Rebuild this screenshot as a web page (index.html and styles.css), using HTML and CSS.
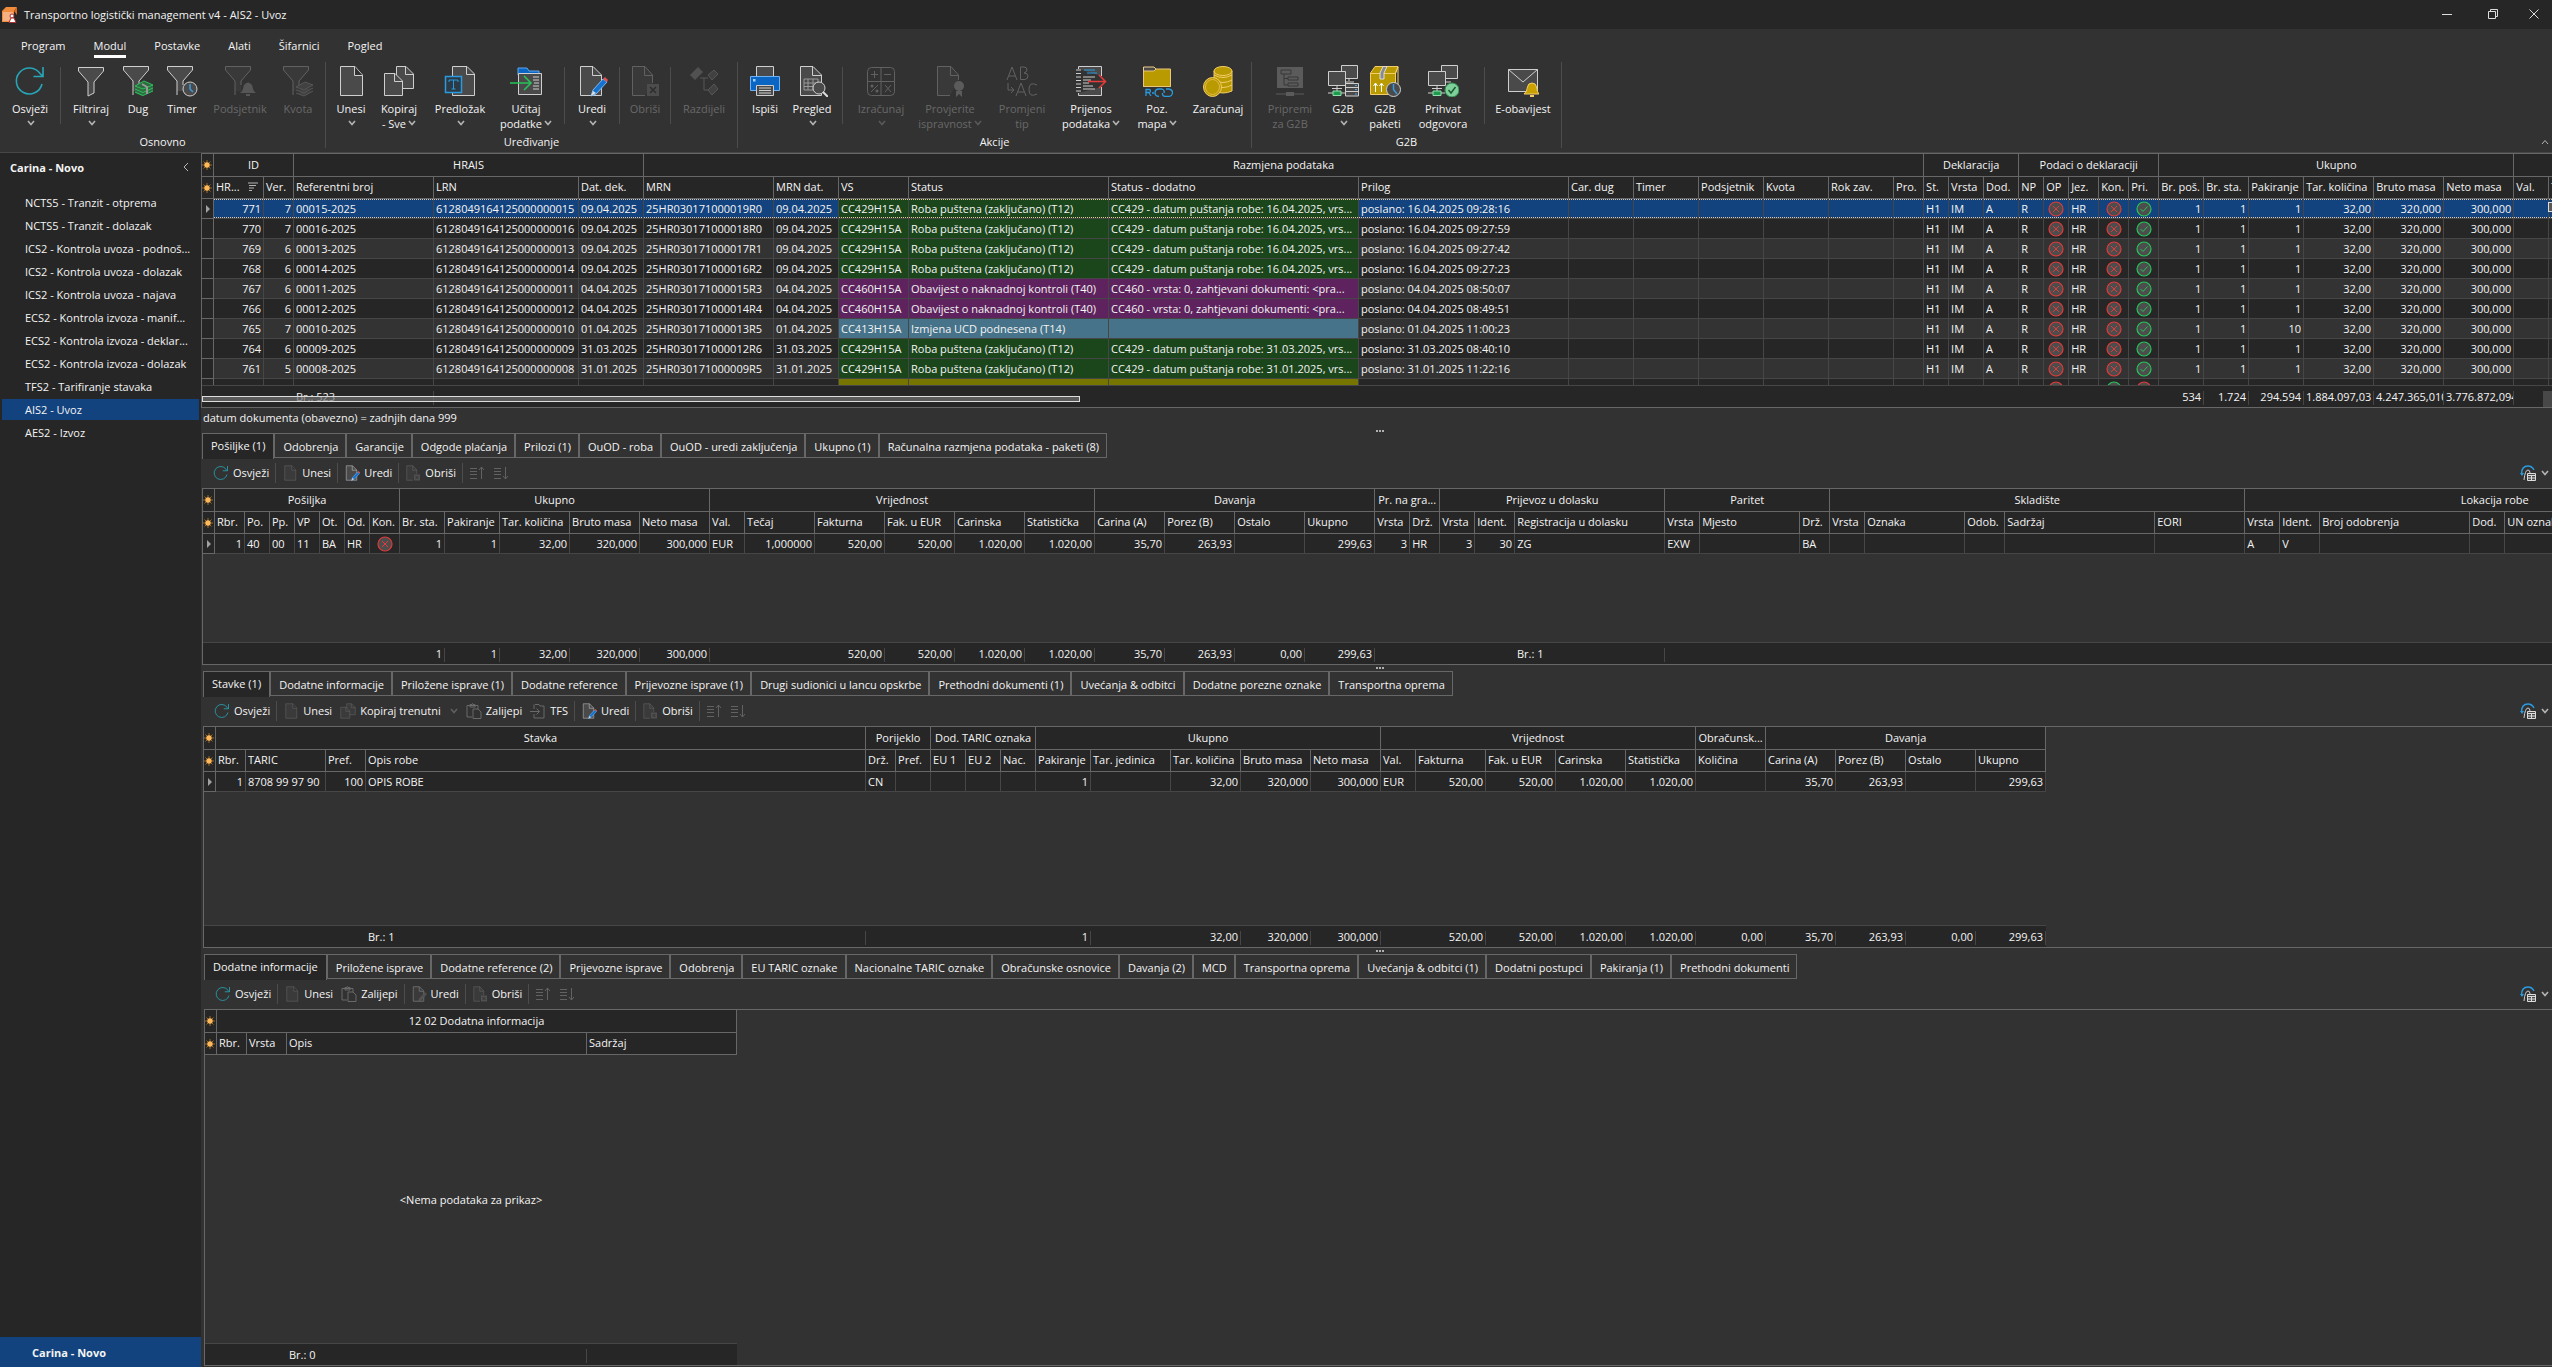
FILE: index.html
```html
<!DOCTYPE html>
<html lang="hr">
  <head>
    <meta charset="UTF-8">
    <meta name="viewport" content="width=device-width, initial-scale=1.0">
    <title>Transportno logistički management v4 - AIS2 - Uvoz</title>
    <link rel="stylesheet" href="styles.css">
  </head>
  <body>
    <!-- icon sprite -->
    <svg class="sprite" aria-hidden="true">
      <symbol id="i-refresh" viewBox="0 0 32 32"><path d="M28 19A13 13 0 1 1 26 8.500L29 11.500M29 2V11.500H19.500" fill="none" stroke="#27a6b8" stroke-width="1.600"/></symbol>
      <symbol id="i-funnel" viewBox="0 0 32 32"><path d="M3.500 2.500H28.500V6L19 17V28L13 31V17L3.500 6Z" fill="#4a4a4a" stroke="#cfcfcf"/></symbol>
      <symbol id="i-funnel-s" viewBox="0 0 32 32"><path d="M1.500 1.500H26.500V5L17 16V26H11V16L1.500 5Z" fill="#4a4a4a"/><path d="M17 20V16L26.500 5V1.500H1.500V5L11 16V30" fill="none" stroke="#cfcfcf"/></symbol>
      <symbol id="i-debt" viewBox="0 0 32 32"><use href="#i-funnel-s"/><path d="M13 21L22 16L31 20V26L20 31L13 28Z" fill="#2f6b41"/><path d="M13 21L22 16L31 20L21 24ZM13 24L21 27.500L31 23M13 27L21 30.500L31 26" fill="none" stroke="#2cc05c"/><path d="M20 19L25 22V29" fill="none" stroke="#999" stroke-width="2"/></symbol>
      <symbol id="i-timer" viewBox="0 0 32 32"><use href="#i-funnel-s"/><circle cx="24" cy="24" r="7" fill="#4a4a4a" stroke="#cfcfcf"/><path d="M24 19V24L27 27" fill="none" stroke="#3a9be0" stroke-width="1.500"/></symbol>
      <symbol id="i-reminder" viewBox="0 0 32 32"><use href="#i-funnel-s"/><path d="M16 28C19 26 19 23 20 20Q24 15 28 20C29 23 29 26 32 28ZM22 29H26V31H22Z" fill="#aaa"/></symbol>
      <symbol id="i-quota" viewBox="0 0 32 32"><use href="#i-funnel-s"/><path d="M14 22L23 17L31 20L22 25ZM14 25L22 28L31 23M14 28L22 31L31 26" fill="#666" stroke="#aaa"/></symbol>
      <symbol id="i-doc" viewBox="0 0 32 32"><path d="M5.500 1.500H20L27.500 10V30.500H5.500Z" fill="#4a4a4a" stroke="#cfcfcf"/><path d="M19.500 1.500V10.500H27.500" fill="#323232" stroke="#cfcfcf"/></symbol>
      <symbol id="i-copy" viewBox="0 0 32 32"><path d="M13.500 1.500H23L30.500 9V23.500H13.500Z" fill="#4a4a4a" stroke="#cfcfcf"/><path d="M22.500 1.500V9.500H30.500" fill="none" stroke="#cfcfcf"/><path d="M1.500 8.500H12L19.500 16V30.500H1.500Z" fill="#4a4a4a" stroke="#cfcfcf"/><path d="M11.500 8.500V16.500H19.500" fill="none" stroke="#cfcfcf"/></symbol>
      <symbol id="i-template" viewBox="0 0 32 32"><path d="M8.500 1.500H23L30.500 9V30.500H8.500Z" fill="#4a4a4a" stroke="#cfcfcf"/><path d="M22.500 1.500V9.500H30.500" fill="none" stroke="#cfcfcf"/><path d="M1.500 11.500H17.500V27.500H1.500Z" fill="#2b3a44" stroke="#2a9be0" stroke-width="1.500"/><path d="M5 17V15H14V17M9.500 15V24M7.500 24H11.500" fill="none" stroke="#2a9be0"/></symbol>
      <symbol id="i-load" viewBox="0 0 32 32"><path d="M8 3H17L19 6H29V10H8Z" fill="#0a66c2" stroke="#5ea6ee"/><path d="M8.500 8.500H31.500V29.500H8.500Z" fill="#4a4a4a" stroke="#cfcfcf"/><path d="M23 12H29M23 15H29M24 18H29M23 21H29M23 24H29" stroke="#cfcfcf"/><path d="M0 18H20M14 11L21 18L14 25" fill="none" stroke="#26c45a" stroke-width="1.500"/></symbol>
      <symbol id="i-edit" viewBox="0 0 32 32"><path d="M4.500 1.500H17L25.500 10V30.500H4.500Z" fill="#4a4a4a" stroke="#cfcfcf"/><path d="M16.500 1.500V10.500H25.500" fill="none" stroke="#cfcfcf"/><path d="M15 31L17 25L27 14L31 17L20 29Z" fill="#1573cf" stroke="#7fb8f0"/><path d="M15 31L17 26L20 28Z" fill="#ddd"/><path d="M27 14L29 12L32 15L31 17Z" fill="#e05050"/></symbol>
      <symbol id="i-edit-off" viewBox="0 0 32 32"><path d="M4.500 1.500H17L25.500 10V30.500H4.500Z" fill="#4a4a4a" stroke="#cfcfcf" stroke-width="2"/><path d="M16.500 1.500V10.500H25.500" fill="none" stroke="#cfcfcf" stroke-width="2"/><path d="M15 31L17 25L28 13L31 16L20 29Z" fill="#888" stroke="#aaa"/></symbol>
      <symbol id="i-delete" viewBox="0 0 32 32"><path d="M16 30.500H3.500V1.500H16L23.500 10V18" fill="#4a4a4a" stroke="#cfcfcf"/><path d="M15.500 1.500V10.500H23.500" fill="none" stroke="#cfcfcf"/><path d="M18 19H30V31H18Z" fill="#888"/><path d="M21 22L27 28M27 22L21 28" stroke="#222" stroke-width="1.500"/></symbol>
      <symbol id="i-split" viewBox="0 0 32 32"><path d="M2 10L10 2L15 7L7 15Z" fill="#999"/><path d="M20 10L26 5L30 9L24 15ZM20 25L26 19L30 24L24 30Z" fill="#666" stroke="#aaa"/><path d="M12 13H20M16 13V25H20" fill="none" stroke="#aaa"/></symbol>
      <symbol id="i-print" viewBox="0 0 32 32"><path d="M7.500 1.500H24.500V12H7.500Z" fill="#4a4a4a" stroke="#cfcfcf"/><path d="M1.500 11.500H30.500V25.500H1.500Z" fill="#0a66c2" stroke="#6db1f3"/><path d="M4 14H6.500V16.500H4Z" fill="#9fd0ff"/><path d="M7.500 20.500H24.500V30.500H7.500Z" fill="#4a4a4a" stroke="#cfcfcf"/><path d="M10 23H22M10 25.500H22M10 28H22" stroke="#cfcfcf"/></symbol>
      <symbol id="i-preview" viewBox="0 0 32 32"><path d="M4.500 1.500H17L25.500 10V30.500H4.500Z" fill="#4a4a4a" stroke="#cfcfcf"/><path d="M16.500 1.500V10.500H25.500" fill="none" stroke="#cfcfcf"/><path d="M8 14H22V25H8ZM8 18H22M8 21.500H22M12 14V25M17 14V25" fill="none" stroke="#999"/><circle cx="23" cy="23" r="6" fill="#4a4a4a" stroke="#cfcfcf"/><path d="M27 27L32 32" stroke="#ddd" stroke-width="2"/></symbol>
      <symbol id="i-calc" viewBox="0 0 32 32"><rect x="2.500" y="2.500" width="27" height="28" rx="4" fill="none" stroke="#cfcfcf"/><path d="M16 2.500V30.500M2.500 16.500H29.500M6 9.500H13M9.500 6V13M19 9.500H26M20 20L26 27M26 20L20 27M6 27L13 20" fill="none" stroke="#cfcfcf"/><circle cx="7" cy="21" r="1.500" fill="#cfcfcf"/><circle cx="12" cy="26" r="1.500" fill="#cfcfcf"/></symbol>
      <symbol id="i-verify" viewBox="0 0 32 32"><path d="M16 30.500H3.500V1.500H17L24.500 10V15" fill="#4a4a4a" stroke="#cfcfcf"/><path d="M16.500 1.500V10.500H24.500" fill="none" stroke="#cfcfcf"/><circle cx="25" cy="21" r="5" fill="#bbb"/><path d="M22 26V32L25 29L28 32V26Z" fill="#bbb"/></symbol>
      <symbol id="i-retype" viewBox="0 0 32 32"><path d="M1 15L6 2L11 15M3 11H9M14.500 2V14.500H19Q22 14 22 11Q22 8 18 8Q21 7 21 5Q21 2 18 2ZM2 18V25H8M5 22L8 25L5 28M10 31L15 18L20 31M12 27H18M31 20Q23 16 23 24.500Q23 33 31 29" fill="none" stroke="#cfcfcf"/></symbol>
      <symbol id="i-transfer" viewBox="0 0 32 32"><path d="M3.500 4V1.500H26.500V11M26.500 22V30.500H3.500V28" fill="#4a4a4a" stroke="#cfcfcf"/><path d="M1 5H6M1 8.500H6M1 12H6M1 15.500H6M1 19H6M1 22.500H6M1 26H6" stroke="#cfcfcf"/><path d="M9 5H20M12 8H22" stroke="#2a9be0"/><path d="M8 12H20M8 15H16M8 18H14M8 21H18M8 24H20" stroke="#cfcfcf"/><path d="M13 16.500H30M24 10L30.500 16.500L24 23" fill="none" stroke="#e83a3a" stroke-width="1.500"/></symbol>
      <symbol id="i-folder" viewBox="0 0 32 32"><path d="M2.500 21.500V2H13L16 5H29.500V21.500Z" fill="#4a4a4a" stroke="#f3cd8a"/><path d="M2.500 21.500V6H13L15 4H29.500V21.500Z" fill="#b99a00" stroke="#e8c77c"/><path d="M5 31V24.500H8Q9.500 24.500 9.500 26Q9.500 27.500 8 27.500H5M8 28L10 31M11 28H13M18 31.500Q14 31 14 28Q14 24 18 24H21Q24 25 23 28M25 24H28Q32 25 31.500 28Q31 31.500 27 31.500H24Q21 31 21.500 28" fill="none" stroke="#2a9be0" stroke-width="1.300"/></symbol>
      <symbol id="i-coins" viewBox="0 0 32 32"><path d="M12 6V26Q21 30 30 26V6Z" fill="#b99a00" stroke="#f3cd6a"/><ellipse cx="21" cy="6" rx="9" ry="4.500" fill="#b99a00" stroke="#f3cd6a"/><path d="M12 10Q21 15 30 10M12 15Q21 20 30 15M12 20Q21 25 30 20" fill="none" stroke="#f3cd6a"/><ellipse cx="10.500" cy="22" rx="9" ry="9.500" fill="#b99a00" stroke="#f3cd6a"/><ellipse cx="10.500" cy="22" rx="7" ry="7.500" fill="none" stroke="#e2b84a"/></symbol>
      <symbol id="i-prepare" viewBox="0 0 32 32"><path d="M3 2H29V23H3Z" fill="#bbb"/><path d="M7 5H17V9H7ZM14 12H24V15H14ZM14 18H24V21H14ZM10 9V20H14M10 13.500H14" fill="none" stroke="#444"/><path d="M2 29H30" stroke="#bbb"/><path d="M12 27H20V31H12Z" fill="#bbb"/></symbol>
      <symbol id="i-g2b" viewBox="0 0 32 32"><path d="M14.500 .5H30.500V13.500H14.500Z" fill="#4a4a4a" stroke="#cfcfcf"/><path d="M22 14V16M17 17H27" stroke="#cfcfcf"/><path d="M1.500 6.500H18.500V20.500H1.500Z" fill="#4a4a4a" stroke="#cfcfcf"/><path d="M10 21V26M5 23.500H15M1 28H18" stroke="#cfcfcf"/><path d="M6 26H14V30.500H6Z" fill="#1f9a4c" stroke="#8fdfae"/><path d="M18.500 18.500H31.500V31H18.500ZM18.500 22.500H31.500M18.500 26.500H31.500" fill="#4a4a4a" stroke="#cfcfcf"/><path d="M28 20.500H30M28 24.500H30M28 29H30" stroke="#4aa8f0"/></symbol>
      <symbol id="i-package" viewBox="0 0 32 32"><path d="M1.500 8L6 1.500H29L26.500 8V29.500H1.500Z" fill="#b99a00" stroke="#f3cd6a"/><path d="M1.500 8.500H26.500L29 2V20" fill="none" stroke="#f3cd6a"/><path d="M14 1.500H18L15 8V14H11V8Z" fill="#8a8a8a" stroke="#ddd"/><path d="M6.500 19V27M4.500 21L6.500 18L8.500 21M12.500 19V27M10.500 21L12.500 18L14.500 21" fill="none" stroke="#fff"/><circle cx="24.500" cy="24.500" r="7" fill="#4a4a4a" stroke="#cfcfcf"/><path d="M24.500 19V24.500L28 29" fill="none" stroke="#3a9be0" stroke-width="1.500"/></symbol>
      <symbol id="i-accept" viewBox="0 0 32 32"><path d="M14.500 .5H30.500V13.500H14.500Z" fill="#4a4a4a" stroke="#cfcfcf"/><path d="M17 17H24" stroke="#cfcfcf"/><path d="M1.500 6.500H18.500V20.500H1.500Z" fill="#4a4a4a" stroke="#cfcfcf"/><path d="M10 21V26M5 23.500H15M1 28H18" stroke="#cfcfcf"/><path d="M6 26H14V30.500H6Z" fill="#1f9a4c" stroke="#8fdfae"/><circle cx="25" cy="25" r="7" fill="#7fcf9b" stroke="#2f8f50"/><path d="M21.500 25L24 28L28.500 22" fill="none" stroke="#1c5a30" stroke-width="1.500"/></symbol>
      <symbol id="i-mail" viewBox="0 0 32 32"><path d="M1.500 4.500H30.500V26.500H1.500Z" fill="#4a4a4a" stroke="#cfcfcf"/><path d="M1.500 4.500L16 17L30.500 4.500" fill="none" stroke="#cfcfcf"/><path d="M17 29Q20 27 20.500 22Q21 18 25 18Q29 18 29.500 22Q30 27 32 29Z" fill="#c9a200" stroke="#f3cd6a"/><path d="M23 31H27" stroke="#f3cd6a" stroke-width="2"/></symbol>
      <symbol id="i-paste" viewBox="0 0 32 32"><path d="M12 28H2V5H24V12M8 8V3H12Q13 -1 14 3H18V8Z" fill="none" stroke="#cfcfcf" stroke-width="2"/><path d="M14 12H24L30 18V31H14Z" fill="none" stroke="#cfcfcf" stroke-width="2"/></symbol>
      <symbol id="i-tfs" viewBox="0 0 32 32"><path d="M10 3H18L20 6H28V30H8V22M8 12V3M0 17H18M13 11L19 17L13 23" fill="none" stroke="#cfcfcf" stroke-width="2"/></symbol>
      <symbol id="i-up" viewBox="0 0 16 16"><path d="M1 3.500H8M1 6.500H8M1 9.500H8M1 13.500H8M12.500 14V2M10 5L12.500 2L15 5" fill="none" stroke="#bbb"/></symbol>
      <symbol id="i-down" viewBox="0 0 16 16"><path d="M1 3.500H8M1 6.500H8M1 9.500H8M1 13.500H8M12.500 2V14M10 11L12.500 14L15 11" fill="none" stroke="#bbb"/></symbol>
      <symbol id="i-restore" viewBox="0 0 16 16"><path d="M1.500 9Q1.500 1 8 1Q12 1 14 5" fill="none" stroke="#2a9be0" stroke-width="1.500"/><path d="M0 8L2 11L4 8Z" fill="#2a9be0"/><path d="M4 15Q5 5 8 5Q10 5 10 8" fill="none" stroke="#cfcfcf"/><path d="M7.500 8.500H15.500V15.500H7.500ZM7.500 10.500H15.500M7.500 13H15.500M11.500 10.500V15.500" fill="#4a4a4a" stroke="#ddd"/></symbol>
      <symbol id="i-chev" viewBox="0 0 8 6"><path d="M1 1L4 4.500L7 1" fill="none" stroke="#b4b4b4" stroke-width="1.600"/></symbol>
      <symbol id="i-star" viewBox="0 0 10 10"><path d="M5 0V10M0 5H10M1.500 1.500L8.500 8.500M8.500 1.500L1.500 8.500" stroke="#9c6a22"/><circle cx="5" cy="5" r="2.700" fill="#ffb95a"/></symbol>
      <symbol id="i-no" viewBox="0 0 16 16"><circle cx="8" cy="8" r="7" fill="#4d4d4d" stroke="#e03a3a" stroke-width="1.200"/><path d="M5 5L11 11M11 5L5 11" stroke="#e03a3a"/></symbol>
      <symbol id="i-yes" viewBox="0 0 16 16"><circle cx="8" cy="8" r="7" fill="#4d4d4d" stroke="#26c45a" stroke-width="1.200"/><path d="M4.500 8L7 10.500L11.500 5.500" fill="none" stroke="#26c45a"/></symbol>
      <symbol id="i-sort" viewBox="0 0 10 9"><path d="M0 1H10M1 3.500H8M1 6H6M1 8.500H4" stroke="#b4b4b4"/></symbol>
    </svg>

    <header class="titlebar">
      <svg class="app-icon" viewBox="0 0 16 16"><path d="M0 4L4 0H15L12 4V15H0Z" fill="#f08c3c"/><path d="M1 5H11V14H1Z" fill="#f5b183"/><path d="M12 4L15 0V8" fill="#d96a1e"/><circle cx="10" cy="9" r="2" fill="#fff" stroke="#a33"/><path d="M7 15.500L9 11H12L14 15.500Z" fill="#fff" stroke="#a33"/></svg>
      <h1>Transportno logistički management v4 - AIS2 - Uvoz</h1>
      <div class="win-buttons">
        <button aria-label="Minimiziraj"><svg viewBox="0 0 10 10"><path d="M0 5.500H10" stroke="#ddd"/></svg></button>
        <button aria-label="Vrati"><svg viewBox="0 0 10 10"><path d="M.5 2.500H7.500V9.500H.5ZM2.500 2V.5H9.500V7.500H8" fill="none" stroke="#ddd"/></svg></button>
        <button aria-label="Zatvori"><svg viewBox="0 0 10 10"><path d="M.5 .5L9.500 9.500M9.500 .5L.5 9.500" stroke="#ddd"/></svg></button>
      </div>
    </header>

    <nav class="menu">
      <button>Program</button>
      <button class="active">Modul</button>
      <button>Postavke</button>
      <button>Alati</button>
      <button>Šifarnici</button>
      <button>Pogled</button>
    </nav>

    <section class="ribbon">
      <div class="group">
        <div class="group-items">
          <button class="rb w50"><svg><use href="#i-refresh"/></svg>Osvježi<br><svg class="chev"><use href="#i-chev"/></svg></button>
          <span class="sep"></span>
          <button class="rb w50"><svg><use href="#i-funnel"/></svg>Filtriraj<br><svg class="chev"><use href="#i-chev"/></svg></button>
          <button class="rb w44"><svg><use href="#i-debt"/></svg>Dug</button>
          <button class="rb w44"><svg><use href="#i-timer"/></svg>Timer</button>
          <button class="rb w72" disabled><svg><use href="#i-reminder"/></svg>Podsjetnik</button>
          <button class="rb w44" disabled><svg><use href="#i-quota"/></svg>Kvota</button>
        </div>
        <div class="group-name">Osnovno</div>
      </div>
      <div class="group">
        <div class="group-items">
          <button class="rb w40"><svg><use href="#i-doc"/></svg>Unesi<br><svg class="chev"><use href="#i-chev"/></svg></button>
          <button class="rb w56"><svg><use href="#i-copy"/></svg>Kopiraj<br>- Sve<svg class="chev"><use href="#i-chev"/></svg></button>
          <button class="rb w66"><svg><use href="#i-template"/></svg>Predložak<br><svg class="chev"><use href="#i-chev"/></svg></button>
          <button class="rb w66"><svg><use href="#i-load"/></svg>Učitaj<br>podatke<svg class="chev"><use href="#i-chev"/></svg></button>
          <span class="sep"></span>
          <button class="rb w44"><svg><use href="#i-edit"/></svg>Uredi<br><svg class="chev"><use href="#i-chev"/></svg></button>
          <span class="sep"></span>
          <button class="rb w40" disabled><svg><use href="#i-delete"/></svg>Obriši</button>
          <span class="sep"></span>
          <button class="rb w56" disabled><svg><use href="#i-split"/></svg>Razdijeli</button>
        </div>
        <div class="group-name">Uređivanje</div>
      </div>
      <div class="group">
        <div class="group-items">
          <button class="rb w44"><svg><use href="#i-print"/></svg>Ispiši</button>
          <button class="rb w50"><svg><use href="#i-preview"/></svg>Pregled<br><svg class="chev"><use href="#i-chev"/></svg></button>
          <span class="sep"></span>
          <button class="rb w66" disabled><svg><use href="#i-calc"/></svg>Izračunaj<br><svg class="chev"><use href="#i-chev"/></svg></button>
          <button class="rb w72" disabled><svg><use href="#i-verify"/></svg>Provjerite<br>ispravnost<svg class="chev"><use href="#i-chev"/></svg></button>
          <button class="rb w72" disabled><svg><use href="#i-retype"/></svg>Promjeni<br>tip</button>
          <button class="rb w66"><svg><use href="#i-transfer"/></svg>Prijenos<br>podataka<svg class="chev"><use href="#i-chev"/></svg></button>
          <button class="rb w66"><svg><use href="#i-folder"/></svg>Poz.<br>mapa<svg class="chev"><use href="#i-chev"/></svg></button>
          <button class="rb w56"><svg><use href="#i-coins"/></svg>Zaračunaj</button>
        </div>
        <div class="group-name">Akcije</div>
      </div>
      <div class="group">
        <div class="group-items">
          <button class="rb w66" disabled><svg><use href="#i-prepare"/></svg>Pripremi<br>za G2B</button>
          <button class="rb w40"><svg><use href="#i-g2b"/></svg>G2B<br><svg class="chev"><use href="#i-chev"/></svg></button>
          <button class="rb w44"><svg><use href="#i-package"/></svg>G2B<br>paketi</button>
          <button class="rb w72"><svg><use href="#i-accept"/></svg>Prihvat<br>odgovora</button>
          <span class="sep"></span>
          <button class="rb w66"><svg><use href="#i-mail"/></svg>E-obavijest</button>
        </div>
        <div class="group-name">G2B</div>
      </div>
      <button class="collapse" aria-label="Sažmi vrpcu"><svg viewBox="0 0 8 6"><path d="M1 5L4 1.500L7 5" fill="none" stroke="#b4b4b4"/></svg></button>
    </section>

    <div class="workspace">
      <aside class="sidebar">
        <div class="side-head">
          <h2>Carina - Novo</h2>
          <button aria-label="Sakrij"><svg viewBox="0 0 6 10"><path d="M5 1L1 5L5 9" fill="none" stroke="#b4b4b4"/></svg></button>
        </div>
        <ul>
          <li><a href="#">NCTS5 - Tranzit - otprema</a></li>
          <li><a href="#">NCTS5 - Tranzit - dolazak</a></li>
          <li><a href="#">ICS2 - Kontrola uvoza - podnoš...</a></li>
          <li><a href="#">ICS2 - Kontrola uvoza - dolazak</a></li>
          <li><a href="#">ICS2 - Kontrola uvoza - najava</a></li>
          <li><a href="#">ECS2 - Kontrola izvoza - manif...</a></li>
          <li><a href="#">ECS2 - Kontrola izvoza - deklar...</a></li>
          <li><a href="#">ECS2 - Kontrola izvoza - dolazak</a></li>
          <li><a href="#">TFS2 - Tarifiranje stavaka</a></li>
          <li><a href="#" class="active">AIS2 - Uvoz</a></li>
          <li><a href="#">AES2 - Izvoz</a></li>
        </ul>
        <a href="#" class="side-foot">Carina - Novo</a>
      </aside>

      <main class="content">
        <div class="grid grid-main" id="declarations">
          <div class="hscroll"></div>
          <div class="vscroll"></div>
          <div class="corner"></div>
        </div>
        <p class="filter">datum dokumenta (obavezno) = zadnjih dana 999</p>
        <div class="splitter"></div>

        <section class="level-1">
          <div class="tabs">
            <button class="active">Pošiljke (1)</button>
            <button>Odobrenja</button>
            <button>Garancije</button>
            <button>Odgode plaćanja</button>
            <button>Prilozi (1)</button>
            <button>OuOD - roba</button>
            <button>OuOD - uredi zaključenja</button>
            <button>Ukupno (1)</button>
            <button>Računalna razmjena podataka - paketi (8)</button>
          </div>
          <div class="toolbar">
            <button><svg><use href="#i-refresh"/></svg>Osvježi</button>
            <span class="tsep"></span>
            <button class="off"><svg><use href="#i-doc"/></svg>Unesi</button>
            <span class="tsep"></span>
            <button><svg><use href="#i-edit"/></svg>Uredi</button>
            <span class="tsep"></span>
            <button class="off"><svg><use href="#i-delete"/></svg>Obriši</button>
            <span class="tsep"></span>
            <button class="off" aria-label="Gore"><svg><use href="#i-up"/></svg></button>
            <button class="off" aria-label="Dolje"><svg><use href="#i-down"/></svg></button>
            <button class="layout" aria-label="Raspored"><svg><use href="#i-restore"/></svg><svg class="chev"><use href="#i-chev"/></svg></button>
          </div>
          <div class="grid grid-consignments" id="consignments"></div>
        </section>
        <div class="splitter splitter-thin"></div>

        <section class="level-2">
          <div class="tabs">
            <button class="active">Stavke (1)</button>
            <button>Dodatne informacije</button>
            <button>Priložene isprave (1)</button>
            <button>Dodatne reference</button>
            <button>Prijevozne isprave (1)</button>
            <button>Drugi sudionici u lancu opskrbe</button>
            <button>Prethodni dokumenti (1)</button>
            <button>Uvećanja &amp; odbitci</button>
            <button>Dodatne porezne oznake</button>
            <button>Transportna oprema</button>
          </div>
          <div class="toolbar">
            <button><svg><use href="#i-refresh"/></svg>Osvježi</button>
            <span class="tsep"></span>
            <button class="off"><svg><use href="#i-doc"/></svg>Unesi</button>
            <button class="off"><svg><use href="#i-copy"/></svg>Kopiraj trenutni<svg class="chev"><use href="#i-chev"/></svg></button>
            <button class="off"><svg><use href="#i-paste"/></svg>Zalijepi</button>
            <button class="off"><svg><use href="#i-tfs"/></svg>TFS</button>
            <span class="tsep"></span>
            <button><svg><use href="#i-edit"/></svg>Uredi</button>
            <span class="tsep"></span>
            <button class="off"><svg><use href="#i-delete"/></svg>Obriši</button>
            <span class="tsep"></span>
            <button class="off" aria-label="Gore"><svg><use href="#i-up"/></svg></button>
            <button class="off" aria-label="Dolje"><svg><use href="#i-down"/></svg></button>
            <button class="layout" aria-label="Raspored"><svg><use href="#i-restore"/></svg><svg class="chev"><use href="#i-chev"/></svg></button>
          </div>
          <div class="grid grid-items" id="items"></div>
        </section>
        <div class="splitter splitter-thin"></div>

        <section class="level-3">
          <div class="tabs">
            <button class="active">Dodatne informacije</button>
            <button>Priložene isprave</button>
            <button>Dodatne reference (2)</button>
            <button>Prijevozne isprave</button>
            <button>Odobrenja</button>
            <button>EU TARIC oznake</button>
            <button>Nacionalne TARIC oznake</button>
            <button>Obračunske osnovice</button>
            <button>Davanja (2)</button>
            <button>MCD</button>
            <button>Transportna oprema</button>
            <button>Uvećanja &amp; odbitci (1)</button>
            <button>Dodatni postupci</button>
            <button>Pakiranja (1)</button>
            <button>Prethodni dokumenti</button>
          </div>
          <div class="toolbar">
            <button><svg><use href="#i-refresh"/></svg>Osvježi</button>
            <span class="tsep"></span>
            <button class="off"><svg><use href="#i-doc"/></svg>Unesi</button>
            <button class="off"><svg><use href="#i-paste"/></svg>Zalijepi</button>
            <span class="tsep"></span>
            <button class="off"><svg><use href="#i-edit-off"/></svg>Uredi</button>
            <span class="tsep"></span>
            <button class="off"><svg><use href="#i-delete"/></svg>Obriši</button>
            <span class="tsep"></span>
            <button class="off" aria-label="Gore"><svg><use href="#i-up"/></svg></button>
            <button class="off" aria-label="Dolje"><svg><use href="#i-down"/></svg></button>
            <button class="layout" aria-label="Raspored"><svg><use href="#i-restore"/></svg><svg class="chev"><use href="#i-chev"/></svg></button>
          </div>
          <div class="grid grid-info" id="info"></div>
        </section>
      </main>
    </div>
    <script src="script.js"></script>
  </body>
</html>
```

FILE: styles.css
```css
* {
  box-sizing: border-box;
}

body {
  margin: 0;
  height: 100vh;
  display: flex;
  flex-direction: column;
  overflow: hidden;
  background-color: #323232;
  color: #f4f4f4;
  font-family: "Open Sans", "Noto Sans", sans-serif;
  font-size: 11px;
  line-height: 15px;
}

h1, h2, p, ul {
  margin: 0;
  padding: 0;
  font-size: 11px;
}

button {
  margin: 0;
  padding: 0;
  border: 0;
  background: none;
  color: inherit;
  font: inherit;
  white-space: nowrap;
}

a {
  color: inherit;
  text-decoration: none;
}

.sprite {
  display: none;
}

.chev {
  width: 8px;
  height: 6px;
}

/* title bar */
.titlebar {
  display: flex;
  align-items: center;
  flex: none;
  height: 29px;
  padding-left: 2px;
  background-color: #262626;
}

.titlebar h1 {
  flex: 1;
  margin-left: 6px;
  font-weight: normal;
}

.app-icon {
  width: 16px;
  height: 16px;
}

.win-buttons {
  display: flex;
}

.win-buttons button {
  width: 46px;
  height: 29px;
}

.win-buttons button:last-child {
  width: 36px;
}

.win-buttons svg {
  width: 10px;
  height: 10px;
}

/* menu */
.menu {
  display: flex;
  flex: none;
  gap: 28px;
  height: 30px;
  padding: 5px 21px 0;
}

.menu button {
  height: 24px;
  padding-bottom: 2px;
}

.menu .active {
  border-bottom: 3px solid #fff;
  padding-bottom: 0;
  padding-top: 1px;
}

/* ribbon */
.ribbon {
  display: flex;
  flex: none;
  height: 94px;
  padding-top: 3px;
  border-bottom: 1px solid #464646;
}

.group {
  height: 86px;
  padding: 0 5px;
  border-right: 1px solid #4c4c4c;
}

.group-items {
  display: flex;
  height: 72px;
}

.group-name {
  text-align: center;
}

.rb {
  display: block;
  padding-top: 3px;
  text-align: center;
  align-self: flex-start;
}

.rb svg {
  display: block;
  width: 32px;
  height: 32px;
  margin: 0 auto 4px;
}

.rb .chev {
  display: inline-block;
  width: 8px;
  height: 6px;
  margin: 0 0 0 2px;
  vertical-align: 2px;
}

.rb:disabled {
  color: #696969;
}

.rb:disabled svg {
  opacity: 0.3;
}

.w40 { width: 40px; }
.w44 { width: 44px; }
.w50 { width: 50px; }
.w56 { width: 56px; }
.w66 { width: 66px; }
.w72 { width: 72px; }

.sep {
  width: 1px;
  height: 57px;
  margin: 5px 5px 0;
  background-color: #4c4c4c;
}

.collapse {
  align-self: flex-end;
  margin-left: auto;
  padding: 0 3px 4px;
}

.collapse svg {
  width: 8px;
  height: 6px;
}

/* layout below the ribbon */
.workspace {
  display: flex;
  flex: 1;
  min-height: 0;
}

.sidebar {
  display: flex;
  flex-direction: column;
  flex: none;
  width: 201px;
  background-color: #262626;
}

.side-head {
  display: flex;
  justify-content: space-between;
  align-items: center;
  height: 29px;
  padding: 0 12px 0 10px;
}

.side-head svg {
  width: 6px;
  height: 10px;
}

.sidebar ul {
  flex: 1;
  padding: 10px 2px 0;
  list-style: none;
}

.sidebar li {
  height: 23px;
}

.sidebar li a {
  display: block;
  height: 21px;
  padding-left: 23px;
  line-height: 21px;
  white-space: nowrap;
}

.sidebar li .active {
  background-color: #12437f;
}

.side-foot {
  height: 30px;
  padding-left: 32px;
  background-color: #12437f;
  font-weight: bold;
  line-height: 31px;
}

.content {
  display: flex;
  flex-direction: column;
  flex: 1;
  min-width: 0;
}

.filter {
  height: 20px;
  padding-left: 2px;
  line-height: 20px;
}

.splitter {
  display: flex;
  justify-content: center;
  align-items: center;
  flex: none;
  height: 5px;
  padding-left: 6px;
}

.splitter::after {
  content: "";
  width: 8px;
  height: 2px;
  background: repeating-linear-gradient(90deg, #b0b0b0 0 2px, transparent 2px 3px);
}

.splitter-thin {
  height: 6px;
}

.level-1 { padding-left: 1px; }
.level-2 { padding-left: 2px; }

.level-3 {
  display: flex;
  flex-direction: column;
  flex: 1;
  min-height: 0;
  padding-left: 3px;
  padding-bottom: 1px;
}

/* tabs */
.tabs {
  display: flex;
  align-items: flex-end;
  flex: none;
  height: 26px;
}

.tabs button {
  height: 25px;
  margin-bottom: 1px;
  padding: 1px 7px 0 8px;
  border: 1px solid #676767;
}

.tabs .active {
  height: 26px;
  margin-bottom: 0;
  padding: 0 8px 2px;
  border-bottom: 0;
  background-color: #262626;
}

/* toolbar */
.toolbar {
  display: flex;
  align-items: center;
  flex: none;
  height: 29px;
  padding: 0 0 2px 7px;
}

.toolbar button {
  display: flex;
  align-items: center;
  gap: 4px;
  height: 20px;
  padding: 0 4px;
}

.toolbar svg {
  width: 16px;
  height: 16px;
}

.toolbar .chev {
  width: 8px;
  height: 6px;
  margin-left: 5px;
}

.toolbar .off svg {
  opacity: 0.35;
}

.toolbar .layout {
  margin-left: auto;
  padding: 0 3px;
  gap: 0;
}

.tsep {
  width: 1px;
  height: 20px;
  margin: 0 2px;
  background-color: #4c4c4c;
}

/* grids */
.grid {
  position: relative;
  display: flex;
  flex-direction: column;
  flex: none;
  overflow: hidden;
  border: 1px solid #676767;
  border-right: 0;
}

.grid-main { height: 255px; }
.grid-consignments { height: 177px; }
.grid-items { height: 222px; }

.grid-info {
  flex: 1;
}

.grid-body {
  flex: 1;
  min-height: 0;
  overflow: hidden;
}

.grid table {
  table-layout: fixed;
  border-collapse: separate;
  border-spacing: 0;
}

.grid th, .grid td {
  height: 20px;
  padding: 0 2px;
  border-right: 1px solid #464646;
  border-bottom: 1px solid #464646;
  background-color: #262626;
  font-weight: normal;
  line-height: 19px;
  text-align: left;
  white-space: nowrap;
  overflow: hidden;
}

.grid th {
  height: 22px;
  padding-bottom: 2px;
  border-color: #676767;
}

.grid .bands th {
  height: 23px;
  text-align: center;
}

.grid .num {
  text-align: right;
}

.grid .icon-cell {
  padding: 0;
}

.grid .icon-cell svg {
  display: block;
  width: 16px;
  height: 16px;
  margin: 0 auto;
}

.grid .mark {
  padding: 0;
  border-color: #676767;
}

.grid .mark svg {
  display: block;
  width: 10px;
  height: 10px;
}

.grid .sort {
  width: 10px;
  height: 9px;
  margin-left: 8px;
}

.current .mark::after {
  content: "";
  display: block;
  width: 4px;
  margin-left: 4px;
  border: 4px solid transparent;
  border-left-color: #a0a0a0;
  border-right: 0;
}

.striped tr:nth-child(odd) td {
  background-color: #333333;
}

/* focused row with its dotted frame */
.striped tbody .current td {
  background-color: #12437f;
  background-image: repeating-linear-gradient(90deg, #e8c8a0 0 1px, transparent 1px 2px), repeating-linear-gradient(90deg, #e8c8a0 0 1px, transparent 1px 2px);
  background-size: 100% 1px;
  background-position: top, bottom;
  background-repeat: no-repeat;
}

.striped tbody .current .mark {
  background-image: none;
}

.striped tbody tr .mark { background-color: #262626; }
.striped tbody tr .green { background-color: #1b451b; }
.striped tbody tr .purple { background-color: #5e235e; }
.striped tbody tr .teal { background-color: #467389; }
.striped tbody tr .olive { background-color: #757500; }

.grid-foot {
  flex: none;
  height: 22px;
  padding-top: 5px;
  overflow: hidden;
  border-top: 1px solid #464646;
  background-color: #262626;
}

.grid-foot td {
  height: 14px;
  padding: 0 2px 0 0;
  border: 0;
  line-height: 12px;
  vertical-align: top;
}

.grid-foot td.total {
  padding-left: 2px;
  border-right: 1px solid #464646;
}

.empty {
  display: flex;
  align-items: center;
  justify-content: center;
  height: calc(100% - 45px);
}

/* scroll bars laid over the main grid */
.hscroll {
  position: absolute;
  left: 0;
  bottom: 5px;
  width: 878px;
  height: 6px;
  border: 1px solid #dcdcdc;
  background-color: rgba(112, 112, 112, 0.7);
}

.vscroll {
  position: absolute;
  right: 0;
  top: 48px;
  width: 4px;
  height: 10px;
  border: 1px solid #dcdcdc;
  border-right: 0;
  background-color: #585858;
}

.corner {
  position: absolute;
  right: 0;
  bottom: 0;
  width: 9px;
  height: 16px;
  background-color: #484848;
}
```

FILE: script.js
```js
// columns: [title, width, type]  type: n = number, i = icon
// bands: [title, number of columns]
function icon(name) {
  return '<svg><use href="#i-' + name + '"/></svg>';
}

function cellClass(col) {
  if (col[2] === 'n') return 'num';
  if (col[2] === 'i') return 'icon-cell';
  return '';
}

function colgroup(grid) {
  var html = '<colgroup><col style="width:12px">';
  grid.columns.forEach(function (col) {
    html += '<col style="width:' + col[1] + 'px">';
  });
  return html + '</colgroup>';
}

function buildGrid(id, grid) {
  var el = document.getElementById(id);
  var width = 12;
  grid.columns.forEach(function (col) { width += col[1]; });

  var html = '<table class="' + (grid.striped ? 'striped' : '') + '" style="width:' + width + 'px">' + colgroup(grid);
  html += '<thead><tr class="bands"><th class="mark">' + icon('star') + '</th>';
  grid.bands.forEach(function (band) {
    html += '<th colspan="' + band[1] + '">' + band[0] + '</th>';
  });
  html += '</tr><tr><th class="mark">' + icon('star') + '</th>';
  grid.columns.forEach(function (col) {
    html += '<th>' + col[0] + '</th>';
  });
  html += '</tr></thead><tbody>';
  grid.rows.forEach(function (row, r) {
    html += '<tr' + (r === 0 ? ' class="current"' : '') + '><td class="mark"></td>';
    grid.columns.forEach(function (col, c) {
      var value = row[c] || '';
      var cls = cellClass(col);
      if (row.color && c >= 7 && c <= 9) cls = row.color;
      html += '<td class="' + cls + '">' + (col[2] === 'i' && value ? icon(value) : value) + '</td>';
    });
    html += '</tr>';
  });
  html += '</tbody></table>';
  if (grid.rows.length === 0) {
    html += '<div class="empty" style="width:' + width + 'px">&lt;Nema podataka za prikaz&gt;</div>';
  }

  // summary row
  var foot = '<table style="width:' + width + 'px">' + colgroup(grid) + '<tr><td></td>';
  grid.columns.forEach(function (col, c) {
    var total = grid.totals[c];
    foot += '<td class="' + (total ? 'total ' : '') + (col[2] === 'n' ? 'num' : '') + '">' + (total || '') + '</td>';
  });
  foot += '</tr></table>';

  var footWidth = grid.fullWidth ? '' : ' style="width:' + width + 'px"';
  el.insertAdjacentHTML('afterbegin',
    '<div class="grid-body">' + html + '</div><div class="grid-foot"' + footWidth + '>' + foot + '</div>');
}

function declaration(id, ver, ref, lrn, date, mrn, vs, status, extra, sent, color, packages) {
  var row = [id, ver, ref, '61280491641250000000' + lrn, date, '25HR0301710000' + mrn, date, vs, status, extra,
    'poslano: ' + sent, '', '', '', '', '', '', 'H1', 'IM', 'A', 'R', 'no', 'HR', 'no', 'yes',
    '1', '1', packages || '1', '32,00', '320,000', '300,000'];
  row.color = color;
  return row;
}

var released = 'Roba puštena (zaključano) (T12)';
var control = 'Obavijest o naknadnoj kontroli (T40)';
var controlExtra = 'CC460 - vrsta: 0, zahtjevani dokumenti: &lt;pra...';

function releasedOn(date) {
  return 'CC429 - datum puštanja robe: ' + date + ', vrs...';
}

var last = declaration('760', '3', '00007-2025', '10', '31.01.2025', '08R5', '-', 'Roba puštena s POP (T32)', '', '', 'olive', '1.888');
last[10] = '';
last[23] = 'yes';
last[24] = 'no';
last[26] = '2';
last[29] = '38.487,148';
last[30] = '640,000';

buildGrid('declarations', {
  striped: true,
  fullWidth: true,
  bands: [['ID', 2], ['HRAIS', 3], ['Razmjena podataka', 12], ['Deklaracija', 3], ['Podaci o deklaraciji', 5], ['Ukupno', 6], ['', 2]],
  columns: [
    ['HR...<svg class="sort"><use href="#i-sort"/></svg>', 50, 'n'], ['Ver.', 30, 'n'], ['Referentni broj', 140], ['LRN', 145], ['Dat. dek.', 65],
    ['MRN', 130], ['MRN dat.', 65], ['VS', 70], ['Status', 200], ['Status - dodatno', 250], ['Prilog', 210],
    ['Car. dug', 65], ['Timer', 65], ['Podsjetnik', 65], ['Kvota', 65], ['Rok zav.', 65], ['Pro.', 30],
    ['St.', 25], ['Vrsta', 35], ['Dod.', 35], ['NP', 25], ['OP', 25, 'i'], ['Jez.', 30], ['Kon.', 30, 'i'], ['Pri.', 30, 'i'],
    ['Br. poš.', 45, 'n'], ['Br. sta.', 45, 'n'], ['Pakiranje', 55, 'n'], ['Tar. količina', 70, 'n'], ['Bruto masa', 70, 'n'], ['Neto masa', 70, 'n'],
    ['Val.', 35], ['Tečaj', 70]
  ],
  rows: [
    declaration('771', '7', '00015-2025', '15', '09.04.2025', '19R0', 'CC429H15A', released, releasedOn('16.04.2025'), '16.04.2025 09:28:16', 'green'),
    declaration('770', '7', '00016-2025', '16', '09.04.2025', '18R0', 'CC429H15A', released, releasedOn('16.04.2025'), '16.04.2025 09:27:59', 'green'),
    declaration('769', '6', '00013-2025', '13', '09.04.2025', '17R1', 'CC429H15A', released, releasedOn('16.04.2025'), '16.04.2025 09:27:42', 'green'),
    declaration('768', '6', '00014-2025', '14', '09.04.2025', '16R2', 'CC429H15A', released, releasedOn('16.04.2025'), '16.04.2025 09:27:23', 'green'),
    declaration('767', '6', '00011-2025', '11', '04.04.2025', '15R3', 'CC460H15A', control, controlExtra, '04.04.2025 08:50:07', 'purple'),
    declaration('766', '6', '00012-2025', '12', '04.04.2025', '14R4', 'CC460H15A', control, controlExtra, '04.04.2025 08:49:51', 'purple'),
    declaration('765', '7', '00010-2025', '10', '01.04.2025', '13R5', 'CC413H15A', 'Izmjena UCD podnesena (T14)', '', '01.04.2025 11:00:23', 'teal', '10'),
    declaration('764', '6', '00009-2025', '09', '31.03.2025', '12R6', 'CC429H15A', released, releasedOn('31.03.2025'), '31.03.2025 08:40:10', 'green'),
    declaration('761', '5', '00008-2025', '08', '31.01.2025', '09R5', 'CC429H15A', released, releasedOn('31.01.2025'), '31.01.2025 11:22:16', 'green'),
    last
  ],
  totals: { 2: 'Br.: 523', 25: '534', 26: '1.724', 27: '294.594', 28: '1.884.097,03', 29: '4.247.365,010', 30: '3.776.872,094' }
});

buildGrid('consignments', {
  fullWidth: true,
  bands: [['Pošiljka', 7], ['Ukupno', 5], ['Vrijednost', 6], ['Davanja', 4], ['Pr. na gra...', 2], ['Prijevoz u dolasku', 3], ['Paritet', 3], ['Skladište', 5], ['Lokacija robe', 5]],
  columns: [
    ['Rbr.', 30, 'n'], ['Po.', 25], ['Pp.', 25], ['VP', 25], ['Ot.', 25], ['Od.', 25], ['Kon.', 30, 'i'],
    ['Br. sta.', 45, 'n'], ['Pakiranje', 55, 'n'], ['Tar. količina', 70, 'n'], ['Bruto masa', 70, 'n'], ['Neto masa', 70, 'n'],
    ['Val.', 35], ['Tečaj', 70, 'n'], ['Fakturna', 70, 'n'], ['Fak. u EUR', 70, 'n'], ['Carinska', 70, 'n'], ['Statistička', 70, 'n'],
    ['Carina (A)', 70, 'n'], ['Porez (B)', 70, 'n'], ['Ostalo', 70, 'n'], ['Ukupno', 70, 'n'],
    ['Vrsta', 35, 'n'], ['Drž.', 30], ['Vrsta', 35, 'n'], ['Ident.', 40, 'n'], ['Registracija u dolasku', 150],
    ['Vrsta', 35], ['Mjesto', 100], ['Drž.', 30], ['Vrsta', 35], ['Oznaka', 100], ['Odob.', 40], ['Sadržaj', 150], ['EORI', 90],
    ['Vrsta', 35], ['Ident.', 40], ['Broj odobrenja', 150], ['Dod.', 35], ['UN oznaka', 240]
  ],
  rows: [
    ['1', '40', '00', '11', 'BA', 'HR', 'no', '1', '1', '32,00', '320,000', '300,000', 'EUR', '1,000000', '520,00', '520,00', '1.020,00', '1.020,00',
      '35,70', '263,93', '', '299,63', '3', 'HR', '3', '30', 'ZG', 'EXW', '', 'BA', '', '', '', '', '', 'A', 'V']
  ],
  totals: { 7: '1', 8: '1', 9: '32,00', 10: '320,000', 11: '300,000', 14: '520,00', 15: '520,00', 16: '1.020,00', 17: '1.020,00',
    18: '35,70', 19: '263,93', 20: '0,00', 21: '299,63', 26: 'Br.: 1' }
});

buildGrid('items', {
  bands: [['Stavka', 4], ['Porijeklo', 2], ['Dod. TARIC oznaka', 3], ['Ukupno', 5], ['Vrijednost', 5], ['Obračunsk...', 1], ['Davanja', 4]],
  columns: [
    ['Rbr.', 30, 'n'], ['TARIC', 80], ['Pref.', 40, 'n'], ['Opis robe', 500], ['Drž.', 30], ['Pref.', 35], ['EU 1', 35], ['EU 2', 35], ['Nac.', 35],
    ['Pakiranje', 55, 'n'], ['Tar. jedinica', 80], ['Tar. količina', 70, 'n'], ['Bruto masa', 70, 'n'], ['Neto masa', 70, 'n'],
    ['Val.', 35], ['Fakturna', 70, 'n'], ['Fak. u EUR', 70, 'n'], ['Carinska', 70, 'n'], ['Statistička', 70, 'n'], ['Količina', 70, 'n'],
    ['Carina (A)', 70, 'n'], ['Porez (B)', 70, 'n'], ['Ostalo', 70, 'n'], ['Ukupno', 70, 'n']
  ],
  rows: [
    ['1', '8708 99 97 90', '100', 'OPIS ROBE', 'CN', '', '', '', '', '1', '', '32,00', '320,000', '300,000', 'EUR', '520,00', '520,00', '1.020,00', '1.020,00', '', '35,70', '263,93', '', '299,63']
  ],
  totals: { 3: 'Br.: 1', 9: '1', 11: '32,00', 12: '320,000', 13: '300,000', 15: '520,00', 16: '520,00', 17: '1.020,00', 18: '1.020,00',
    19: '0,00', 20: '35,70', 21: '263,93', 22: '0,00', 23: '299,63' }
});

buildGrid('info', {
  bands: [['12 02 Dodatna informacija', 4]],
  columns: [['Rbr.', 30, 'n'], ['Vrsta', 40], ['Opis', 300], ['Sadržaj', 150]],
  rows: [],
  totals: { 2: 'Br.: 0' }
});
```
